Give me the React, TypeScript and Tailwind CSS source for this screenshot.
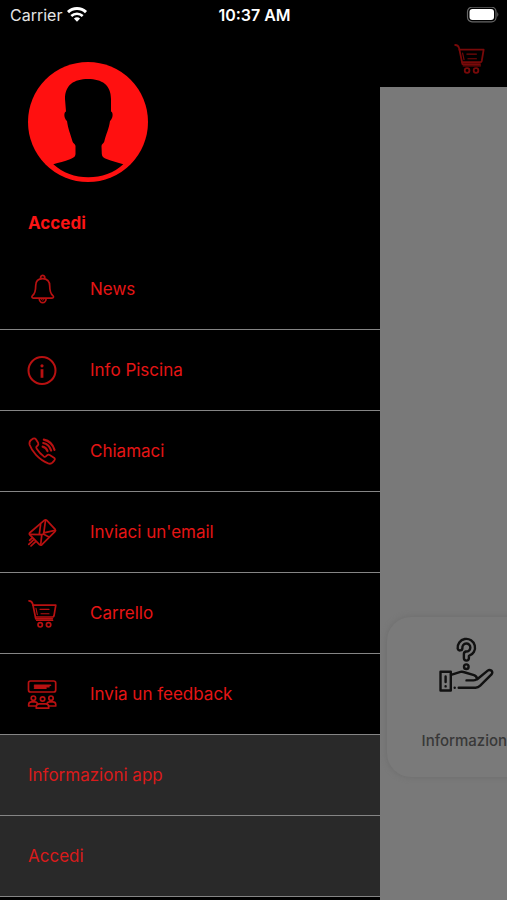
import type { ReactNode } from "react";

function CartIcon({ className }: { className?: string }) {
  return (
    <svg viewBox="0 0 32 32" className={className} fill="none" stroke="currentColor" strokeWidth="1.7" strokeLinecap="round" strokeLinejoin="round" aria-hidden="true">
      <path d="M3 2.800c2 0 3.300 1.200 3.800 3.400L9.800 20.800h16.600" />
      <path d="M7 7.200H29.800L28 17.800Q27.700 19 26.400 19H9.600" />
      <path d="M10 10.400 11.300 16.600M14 11.400H23M15 15.800H23" strokeWidth="1.100" />
      <path d="M10.500 22.400H26.800" strokeWidth="1.100" />
      <circle cx="14.200" cy="26.800" r="2.200" />
      <circle cx="22.600" cy="26.800" r="2.200" />
    </svg>
  );
}

function BellIcon() {
  return (
    <svg viewBox="0 0 32 32" className="size-8" fill="none" stroke="currentColor" strokeWidth="1.700" strokeLinejoin="round" aria-hidden="true">
      <path d="M15.100 4.600a2 2 0 1 1 3.200 0" />
      <path d="M16.700 4.600c-4.600 0-7 3-7 7.200 0 6-.8 8-3.200 9.800-1.100.9-.6 2.500.9 2.500h18.600c1.500 0 2-1.600.9-2.500-2.400-1.800-3.200-3.800-3.200-9.800 0-4.200-2.400-7.200-7-7.200Z" />
      <path d="M13.300 24.400a3.400 4.200 0 0 0 6.800 0" />
      <path d="M15.200 24.400a1.500 1.700 0 0 0 3 0" strokeWidth="1" />
    </svg>
  );
}

function InfoIcon() {
  return (
    <svg viewBox="0 0 32 32" className="size-8" fill="none" stroke="currentColor" aria-hidden="true">
      <circle cx="16" cy="15.500" r="13.500" strokeWidth="2" />
      <path d="M16 14.200v8.600" strokeWidth="2.800" />
      <circle cx="16" cy="10.800" r="1.600" fill="currentColor" stroke="none" />
    </svg>
  );
}

function PhoneIcon() {
  return (
    <svg viewBox="0 0 32 32" className="size-8" fill="none" stroke="currentColor" strokeWidth="1.800" strokeLinecap="round" strokeLinejoin="round" aria-hidden="true">
      <path d="M4.800 4.300 7.200 2.600Q8.800 1.800 9.900 3.300L12.100 6.800Q12.900 8.300 11.700 9.500L10.500 10.600Q9.900 11.500 10.700 12.700 13.600 17.200 17.800 20.400 19 21.200 19.900 20.400L21.200 19.200Q22.400 18.200 23.700 19L28 21.700Q29.500 22.800 28.400 24.300L26.400 26.700Q24.800 28.300 22.200 27.400 15.600 24.900 10 18.900 5.400 13.900 3.600 8.800 3 5.800 4.800 4.300Z" />
      <path d="M16.600 10.600Q20.200 11.300 21.500 15.200M17.200 7Q23.200 8.300 25.200 14.600M17.800 3.600Q26 5.200 28.500 13.900" strokeWidth="2.100" />
    </svg>
  );
}

function MailIcon() {
  return (
    <svg viewBox="0 0 32 32" className="size-8" fill="none" stroke="currentColor" strokeWidth="1.700" strokeLinecap="round" strokeLinejoin="round" aria-hidden="true">
      <path d="M3.700 17.600Q2.800 16.600 4.100 15.500L18.500 3.200Q19.700 2.300 20.800 3.400L29.200 12.400Q30.100 13.600 28.900 14.700L15.900 27.700Q14.700 28.600 13.500 27.600Z" />
      <path d="M3.800 17.400 15.800 17.700Q17.400 17.600 17.800 15.800L19.500 3.400M15.800 17.700 14.700 27.700M17.800 15.800 29 13.300M17.200 17 23 20M13.300 17.400 14.600 7.400" />
      <path d="M7.500 22.800 2.800 27.400M9.600 24.600 5 29M6.200 20.800 3.600 23.400" />
    </svg>
  );
}

function FeedbackIcon() {
  return (
    <svg viewBox="0 0 32 32" className="size-8" fill="none" stroke="currentColor" strokeWidth="1.700" strokeLinecap="round" strokeLinejoin="round" aria-hidden="true">
      <rect x="2.500" y="2" width="27.200" height="11" rx="2" />
      <path d="M8.500 6.200h16M8.500 7.800h14.500M8.500 9.200h11.500" strokeWidth="1.600" />
      <circle cx="7.400" cy="19.200" r="2.200" />
      <circle cx="16.600" cy="20" r="2.200" />
      <circle cx="25" cy="19.200" r="2.200" />
      <path d="M10.300 27H2.700v-1.800q.2-2.300 2.800-2.300h3.400q1.700.2 2.600 1.500M22.500 27h7.200v-1.800q-.2-2.300-2.800-2.300h-3.400q-1.700.2-2.600 1.500" />
      <path d="M10.300 29.200v-2.100q.3-2.300 2.900-2.300h6.600q2.600 0 2.900 2.300v2.100Z" />
    </svg>
  );
}

function HelpHandIcon() {
  return (
    <svg viewBox="0 0 56 56" className="size-14" fill="none" stroke="currentColor" strokeWidth="2.400" strokeLinecap="round" strokeLinejoin="round" aria-hidden="true">
      <path d="M19.700 11.700a8.700 8.700 0 1 1 11.200 7.200v2.200a2.500 2.500 0 0 1-5 0v-4.100q0-1.900 2-2.500a4 4 0 1 0-3.500-3.400 2.400 2.400 0 0 1-4.700.6Z" />
      <circle cx="28.300" cy="29.700" r="2.300" />
      <path d="M2.500 34.700h10.300v18.800H2.500ZM7.600 39.500v5.500" />
      <path d="M7.600 49.300v.1M16.700 50.600v.1M20.700 50.700H37.500Q40.200 50.700 42.200 48.700L53.500 37.400Q55 35.600 53.600 33.800 51.600 32.200 49.700 33.600L39.200 42.200M13 37.800 22.500 34.900Q24 34.500 25.500 35L36 38.200Q39.200 39.400 38.700 42 38 43.400 35.500 43.400H28.500" />
    </svg>
  );
}

function Avatar() {
  return (
    <svg viewBox="0 0 120 120" className="size-[120px]" aria-hidden="true">
      <circle cx="60" cy="60" r="60" fill="#ff1010" />
      <path
        fill="#000"
        d="M60 17C46 17 37 23 37 37L38 49.500C35.500 50.500 36 56.500 39 59 40 67 42.500 72 44.500 79.500 45 81.500 47.500 82 47.500 84L47.500 92C47.300 95 45 96 42 97.200 36.500 99.300 31 100.500 25.300 102.300 35 111 47 115.300 60.300 115.300S86 111 95.300 102.300C89.500 100.500 84 99.200 78.500 97 76 96 74 95 73.800 92L73.500 84C73.500 82 75.800 81.500 76.300 79.500 78 72 81 67 82 59 85 56.500 85.500 50.500 83 49.500V37C83 23 74 17 60 17Z"
      />
    </svg>
  );
}

function StatusBar() {
  return (
    <div className="grid h-[30px] grid-cols-3 items-center bg-black pr-2 pl-[10px] text-[16px] leading-5 text-neutral-200">
      <div className="flex items-center gap-1">
        <span>Carrier</span>
        <svg viewBox="0 0 22 16" className="h-4 w-[22px]" fill="none" stroke="#fff" strokeWidth="3" aria-label="Wi-Fi">
          <path d="M2 5.200a13 13 0 0 1 18 0" />
          <path d="M5.300 9a8.200 8.200 0 0 1 11.400 0" strokeWidth="2.600" />
          <path d="M11 14.800 7.900 11.600a4.500 4.500 0 0 1 6.200 0Z" fill="#fff" stroke="none" />
        </svg>
      </div>
      <time className="text-center font-semibold text-white">10:37 AM</time>
      <svg viewBox="0 0 33 16" className="h-4 w-[33px] justify-self-end" aria-label="Battery">
        <rect x="1.500" y=".2" width="28.500" height="14.600" rx="4.500" fill="none" stroke="#666" strokeWidth="1.200" />
        <rect x="3.500" y="2" width="24.500" height="11" rx="3" fill="#fff" />
        <path d="M31.300 5q2 2.500 0 5Z" fill="#666" />
      </svg>
    </div>
  );
}

const menu: { label: string; icon: ReactNode }[] = [
  { label: "News", icon: <BellIcon /> },
  { label: "Info Piscina", icon: <InfoIcon /> },
  { label: "Chiamaci", icon: <PhoneIcon /> },
  { label: "Inviaci un'email", icon: <MailIcon /> },
  { label: "Carrello", icon: <CartIcon className="size-8" /> },
  { label: "Invia un feedback", icon: <FeedbackIcon /> },
];

const footerLinks = ["Informazioni app", "Accedi"];

function Drawer() {
  return (
    <nav className="w-3/4 shrink-0 bg-black text-[17px] text-[#e51515]">
      <div className="px-7 pt-8">
        <Avatar />
        <a href="#accedi" className="mt-7 mb-[15px] block leading-[26px] font-bold text-[#fb1414]">
          Accedi
        </a>
      </div>
      <ul className="-mt-[2px]">
        {menu.map((item) => (
          <li key={item.label} className="border-b border-[#858585]">
            <a href="#menu" className="flex h-20 items-center gap-8 px-[26px] pt-px">
              <span className="text-[#b81111]">{item.icon}</span>
              {item.label}
            </a>
          </li>
        ))}
        {footerLinks.map((label) => (
          <li key={label} className="border-b border-[#858585] bg-[#292929]">
            <a href="#menu" className="flex h-20 items-center px-7 pt-[2px] text-[#d91b1b]">
              {label}
            </a>
          </li>
        ))}
      </ul>
    </nav>
  );
}

export default function App() {
  return (
    <div className="flex min-h-screen flex-col overflow-hidden bg-black font-['Inter','Liberation_Sans',sans-serif]">
      <StatusBar />
      <div className="flex grow">
        <Drawer />
        <main className="flex min-w-0 grow flex-col overflow-hidden bg-[#797979]">
          <header className="flex h-[57px] shrink-0 justify-end bg-black pr-[21px]">
            <button type="button" aria-label="Carrello" className="self-center text-[#780909]">
              <CartIcon className="size-[34px]" />
            </button>
          </header>
          <div className="flex grow flex-col justify-end pb-[123px] pl-[7px]">
            <a
              href="#informazioni"
              className="flex h-40 w-[158px] flex-col items-center justify-between rounded-3xl bg-[#7a7a7a] pt-5 pb-6 text-[15px] leading-6 font-medium text-[#383838] shadow-[0_0_5px_1px_#707070]"
            >
              <span className="text-[#111]">
                <HelpHandIcon />
              </span>
              Informazioni
            </a>
          </div>
        </main>
      </div>
    </div>
  );
}
